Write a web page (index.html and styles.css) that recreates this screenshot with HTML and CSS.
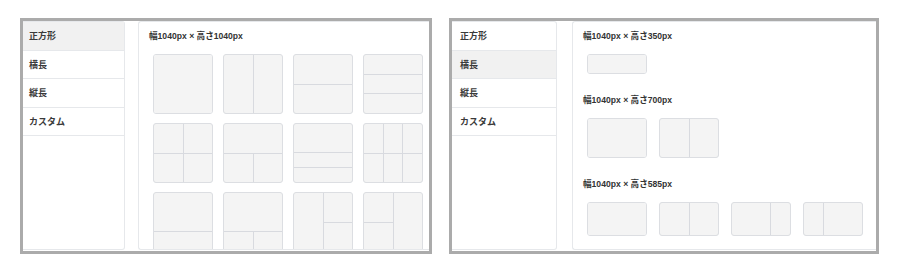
FILE: index.html
```html
<!DOCTYPE html>
<html lang="ja">
<head>
    <meta charset="UTF-8">
    <meta name="viewport" content="width=device-width, initial-scale=1.0">
    <title>サイズ選択</title>
    <link rel="stylesheet" href="styles.css">
</head>
<body>

    <div class="frame frame-square">
        <ul class="menu">
            <li class="menu-item active">正方形</li>
            <li class="menu-item">横長</li>
            <li class="menu-item">縦長</li>
            <li class="menu-item">カスタム</li>
        </ul>
        <div class="panel">
            <div class="size-title">幅1040px × 高さ1040px</div>
            <div class="tiles tiles-square">
                <div class="tile t-one"><span></span></div>
                <div class="tile t-cols2"><span></span><span></span></div>
                <div class="tile t-rows2"><span></span><span></span></div>
                <div class="tile t-rows3"><span></span><span></span><span></span></div>

                <div class="tile t-grid4"><span></span><span></span><span></span><span></span></div>
                <div class="tile t-top-split"><span></span><span></span><span></span></div>
                <div class="tile t-half-quarters"><span></span><span></span><span></span></div>
                <div class="tile t-grid6"><span></span><span></span><span></span><span></span><span></span><span></span></div>

                <div class="tile t-rows-2-1"><span></span><span></span></div>
                <div class="tile t-big-split"><span></span><span></span><span></span></div>
                <div class="tile t-left-big"><span></span><span></span><span></span></div>
                <div class="tile t-right-big"><span></span><span></span><span></span></div>
            </div>
        </div>
    </div>

    <div class="frame frame-wide">
        <ul class="menu">
            <li class="menu-item">正方形</li>
            <li class="menu-item active">横長</li>
            <li class="menu-item">縦長</li>
            <li class="menu-item">カスタム</li>
        </ul>
        <div class="panel">
            <div class="size-title">幅1040px × 高さ350px</div>
            <div class="tiles tiles-wide">
                <div class="tile h-350 t-one"><span></span></div>
            </div>

            <div class="size-title">幅1040px × 高さ700px</div>
            <div class="tiles tiles-wide">
                <div class="tile h-700 t-one"><span></span></div>
                <div class="tile h-700 t-cols2"><span></span><span></span></div>
            </div>

            <div class="size-title">幅1040px × 高さ585px</div>
            <div class="tiles tiles-wide">
                <div class="tile h-585 t-one"><span></span></div>
                <div class="tile h-585 t-cols2"><span></span><span></span></div>
                <div class="tile h-585 t-cols-2-1"><span></span><span></span></div>
                <div class="tile h-585 t-cols-1-2"><span></span><span></span></div>
            </div>
        </div>
    </div>

</body>
</html>
```

FILE: styles.css
```css
body
    {
        margin: 0;
        padding: 18px 0 0 20px;
        display: flex;
        gap: 17px;
        background: #ffffff;
        font-family: "Noto Sans CJK JP", "Noto Sans", sans-serif;
        color: #3a3a3a;
    }
    .frame
    {
        display: flex;
        height: 236px;
        box-sizing: border-box;
        border: 3px solid #ababab;
        padding-bottom: 1px;
        background: #ffffff;
        overflow: hidden;
    }
    .frame-square
    {
        width: 412px;
        gap: 13px;
    }
    .frame-wide
    {
        width: 430px;
        gap: 15px;
    }
    .menu
    {
        margin: 0;
        padding: 0;
        list-style: none;
        box-sizing: border-box;
        border: 1px solid #e6e8eb;
        border-left: none;
        border-radius: 0 3px 3px 0;
        background: #ffffff;
    }
    .frame-square .menu
    {
        width: 102px;
    }
    .frame-wide .menu
    {
        width: 105px;
    }
    .menu-item
    {
        height: 28.5px;
        box-sizing: border-box;
        display: flex;
        align-items: center;
        border-bottom: 1px solid #e6e8eb;
        font-size: 9px;
        font-weight: bold;
    }
    .frame-square .menu-item
    {
        padding-left: 6px;
    }
    .frame-wide .menu-item
    {
        padding-left: 8px;
    }
    .menu-item.active
    {
        background: #f1f1f1;
    }
    .panel
    {
        flex: 1;
        box-sizing: border-box;
        border: 1px solid #e6e8eb;
        border-right: none;
        border-radius: 3px 0 0 3px;
        padding: 8px 0 0 10px;
        overflow: hidden;
    }
    .size-title
    {
        height: 12px;
        line-height: 12px;
        font-family: "Liberation Sans", "Noto Sans CJK JP", sans-serif;
        font-size: 8.6px;
        font-weight: bold;
        color: #333333;
        margin-bottom: 12px;
    }
    .tiles
    {
        display: flex;
        flex-wrap: wrap;
        padding-left: 4px;
    }
    .tiles-square
    {
        width: 280px;
        gap: 9px 10px;
    }
    .tiles-wide
    {
        gap: 12px;
        margin-bottom: 20px;
    }
    .tile
    {
        width: 60px;
        height: 60px;
        box-sizing: border-box;
        display: grid;
        gap: 1px;
        background: #d8dadf;
        border: 1px solid #dcdee2;
        border-radius: 3px;
        overflow: hidden;
    }
    .tile span
    {
        background: #f4f4f4;
    }
    .h-350
    {
        height: 20px;
    }
    .h-700
    {
        height: 40px;
    }
    .h-585
    {
        height: 34px;
    }
    .t-cols2
    {
        grid-template-columns: 1fr 1fr;
    }
    .t-rows2
    {
        grid-template-rows: 1fr 1fr;
    }
    .t-rows3
    {
        grid-template-rows: 1fr 1fr 1fr;
    }
    .t-grid4
    {
        grid-template-columns: 1fr 1fr;
        grid-template-rows: 1fr 1fr;
    }
    .t-top-split
    {
        grid-template-columns: 1fr 1fr;
        grid-template-rows: 1fr 1fr;
    }
    .t-top-split span:first-child
    {
        grid-column: 1 / 3;
    }
    .t-half-quarters
    {
        grid-template-rows: 2fr 1fr 1fr;
    }
    .t-grid6
    {
        grid-template-columns: 1fr 1fr 1fr;
        grid-template-rows: 1fr 1fr;
    }
    .t-rows-2-1
    {
        grid-template-rows: 2fr 1fr;
    }
    .t-big-split
    {
        grid-template-columns: 1fr 1fr;
        grid-template-rows: 2fr 1fr;
    }
    .t-big-split span:first-child
    {
        grid-column: 1 / 3;
    }
    .t-left-big
    {
        grid-template-columns: 1fr 1fr;
        grid-template-rows: 1fr 1fr;
    }
    .t-left-big span:first-child
    {
        grid-row: 1 / 3;
    }
    .t-right-big
    {
        grid-template-columns: 1fr 1fr;
        grid-template-rows: 1fr 1fr;
    }
    .t-right-big span:nth-child(2)
    {
        grid-column: 2;
        grid-row: 1 / 3;
    }
    .t-cols-2-1
    {
        grid-template-columns: 2fr 1fr;
    }
    .t-cols-1-2
    {
        grid-template-columns: 1fr 2fr;
    }
```
